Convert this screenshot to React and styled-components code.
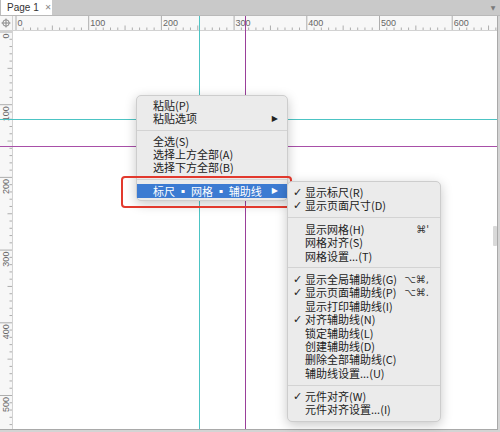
import React from 'react'
import styled, { createGlobalStyle } from 'styled-components'

const GlobalStyle = createGlobalStyle`
  html, body {
    margin: 0;
    padding: 0;
    overflow: hidden;
    background: #d4d4d4;
  }
`;

const SCALE = 0.727;

const Frame = styled.div`
  width: 500px;
  height: 432px;
  position: relative;
  overflow: hidden;
  background: #d4d4d4;
  font-family: "Liberation Sans", "Noto Sans CJK SC", sans-serif;
`;

const TabBar = styled.div`
  height: 16px;
  display: flex;
  align-items: stretch;
  background: #c9c9c9;
  border-bottom: 1px solid #b9b9b9;
  box-sizing: border-box;
`;

const Tab = styled.div`
  width: 52px;
  background: #fff;
  display: flex;
  align-items: center;
  padding-left: 6px;
  box-sizing: border-box;
  font-size: 10px;
  color: #333;
  white-space: nowrap;
  border-left: 1px solid #bbb;
`;

const Close = styled.span`
  margin-left: 6px;
  font-family: "DejaVu Sans", sans-serif;
  font-size: 8px;
  color: #8a8a8a;
`;

const Spacer = styled.div`
  flex: 1;
`;

const DropArrow = styled.div`
  width: 14px;
  display: flex;
  align-items: center;
  justify-content: center;
  font-family: "DejaVu Sans", sans-serif;
  font-size: 6px;
  color: #7a7a7a;
`;

const Workspace = styled.div`
  position: relative;
  width: 498px;
  height: 414px;
  display: flex;
  flex-direction: column;
  background: #fff;
  border-right: 1px solid #a9a9a9;
  border-bottom: 1px solid #a9a9a9;
  box-sizing: border-box;
`;

const TopRow = styled.div`
  height: 14px;
  display: flex;
  background: #f7f7f7;
  border-bottom: 1px solid #d2d2d2;
`;

const Corner = styled.div`
  width: 12px;
  display: flex;
  align-items: center;
  justify-content: center;
  border-right: 1px solid #d2d2d2;
`;

const BodyRow = styled.div`
  flex: 1;
  display: flex;
  min-height: 0;
`;

const SideRuler = styled.div`
  width: 12px;
  background: #f7f7f7;
  border-right: 1px solid #d2d2d2;
`;

const Canvas = styled.div`
  flex: 1;
  position: relative;
  background: #fff;
`;

const ScrollThumb = styled.div`
  position: absolute;
  right: 0;
  top: 195px;
  width: 4px;
  height: 20px;
  background: #d9d9d9;
  border-radius: 1px;
`;

const VGuide = styled.div`
  position: absolute;
  top: 0;
  bottom: 0;
  width: 1px;
  left: ${p => p.$at}px;
  background-color: ${p => p.$color};
  box-shadow: 0 0 0.6px ${p => p.$color};
`;

const HGuide = styled.div`
  position: absolute;
  left: 0;
  right: 0;
  height: 1px;
  top: ${p => p.$at}px;
  background-color: ${p => p.$color};
  box-shadow: 0 0 0.6px ${p => p.$color};
`;

const Menu = styled.div`
  position: absolute;
  left: ${p => p.$left}px;
  top: ${p => p.$top}px;
  width: ${p => p.$width}px;
  padding: ${p => p.$pad};
  background: #ebebeb;
  border: 1px solid #cdcdcd;
  border-radius: 5px;
  box-shadow: 0 3px 12px rgba(0, 0, 0, 0.22);
  box-sizing: border-box;
  font-family: "Noto Sans CJK SC", "DejaVu Sans", sans-serif;
  font-size: 11px;
  color: #222;
`;

const Item = styled.div`
  height: ${p => p.$h}px;
  line-height: ${p => p.$h}px;
  display: flex;
  align-items: center;
  padding: 0 ${p => p.$padRight}px 0 ${p => p.$padLeft}px;
  background: ${p => (p.$active ? '#3c7bd2' : 'transparent')};
  color: ${p => (p.$active ? '#fff' : 'inherit')};
  white-space: nowrap;
`;

const Check = styled.span`
  width: 11px;
  margin-left: -12px;
  margin-right: 1px;
  font-family: "DejaVu Sans", sans-serif;
  font-size: 11px;
  font-weight: bold;
`;

const Label = styled.span`
  flex: 1;
`;

const Arrow = styled.span`
  font-family: "DejaVu Sans", sans-serif;
  font-size: 8px;
`;

const Shortcut = styled.span`
  font-family: "DejaVu Sans", sans-serif;
  font-size: 10px;
  color: #333;
`;

const Separator = styled.div`
  height: 1px;
  margin: ${p => p.$gap}px 0;
  background: #d3d3d3;
`;

const Highlight = styled.div`
  position: absolute;
  left: 121px;
  top: 176px;
  width: 171px;
  height: 32px;
  border: 2px solid #e2392d;
  border-radius: 4px;
  box-sizing: border-box;
`;

function TopRulerSvg() {
  const ticks = [];
  for (let u = 0; u <= 670; u += 10) {
    const x = 3 + u * SCALE;
    const len = u % 100 === 0 ? 14 : u % 50 === 0 ? 4.5 : 2.5;
    ticks.push(<line key={u} x1={x} x2={x} y1={14 - len} y2={14} stroke="#9a9a9a" strokeWidth="0.8" />);
    if (u % 100 === 0) {
      ticks.push(
        <text key={'t' + u} x={x + 1.5} y={9.5} fontSize="9" fill="#666" fontFamily="Liberation Sans, sans-serif">{u}</text>
      );
    }
  }
  return (
    <svg width="485" height="14" style={{ display: 'block' }}>{ticks}</svg>
  );
}

function SideRulerSvg() {
  const ticks = [];
  for (let u = 0; u <= 560; u += 10) {
    const y = 1 + u * SCALE;
    const len = u % 100 === 0 ? 12 : u % 50 === 0 ? 4.5 : 2.5;
    ticks.push(<line key={u} y1={y} y2={y} x1={12 - len} x2={12} stroke="#9a9a9a" strokeWidth="0.8" />);
    if (u % 100 === 0) {
      ticks.push(
        <text key={'t' + u} x={9} y={y + 1.5} fontSize="9" fill="#666" textAnchor="end"
          fontFamily="Liberation Sans, sans-serif" transform={`rotate(-90 9 ${y + 1.5})`}>{u}</text>
      );
    }
  }
  return (
    <svg width="12" height="400" style={{ display: 'block' }}>{ticks}</svg>
  );
}

function CrossHair() {
  return (
    <svg width="10" height="10" viewBox="0 0 10 10">
      <circle cx="5" cy="5" r="3.2" fill="none" stroke="#8a8a8a" strokeWidth="1" />
      <line x1="5" y1="0.5" x2="5" y2="9.5" stroke="#8a8a8a" strokeWidth="1" />
      <line x1="0.5" y1="5" x2="9.5" y2="5" stroke="#8a8a8a" strokeWidth="1" />
    </svg>
  );
}

const mainMenu = [
  { label: '粘贴(P)' },
  { label: '粘贴选项', sub: true },
  'sep',
  { label: '全选(S)' },
  { label: '选择上方全部(A)' },
  { label: '选择下方全部(B)' },
  'sep',
  { label: '标尺 ▪ 网格 ▪ 辅助线', sub: true, active: true },
];

const subMenu = [
  { label: '显示标尺(R)', check: true },
  { label: '显示页面尺寸(D)', check: true },
  'sep',
  { label: '显示网格(H)', key: "⌘'" },
  { label: '网格对齐(S)' },
  { label: '网格设置...(T)' },
  'sep',
  { label: '显示全局辅助线(G)', check: true, key: '⌥⌘,' },
  { label: '显示页面辅助线(P)', check: true, key: '⌥⌘.' },
  { label: '显示打印辅助线(I)' },
  { label: '对齐辅助线(N)', check: true },
  { label: '锁定辅助线(L)' },
  { label: '创建辅助线(D)' },
  { label: '删除全部辅助线(C)' },
  { label: '辅助线设置...(U)' },
  'sep',
  { label: '元件对齐(W)', check: true },
  { label: '元件对齐设置...(I)' },
];

export default function App() {
  return (
    <Frame>
      <GlobalStyle />
      <TabBar>
        <Tab>Page 1<Close>✕</Close></Tab>
        <Spacer />
        <DropArrow>▼</DropArrow>
      </TabBar>
      <Workspace>
        <TopRow>
          <Corner><CrossHair /></Corner>
          <TopRulerSvg />
        </TopRow>
        <BodyRow>
          <SideRuler><SideRulerSvg /></SideRuler>
          <Canvas>
            <ScrollThumb />
          </Canvas>
        </BodyRow>
        <VGuide $at={199} $color="#4cc4c4" />
        <VGuide $at={245} $color="#9a3f9a" />
        <HGuide $at={103} $color="#4cc4c4" />
        <HGuide $at={130} $color="#a84fa8" />
      </Workspace>

      <Menu $left={136} $top={95} $width={152} $pad="3px 0 2px">
        {mainMenu.map((it, i) =>
          it === 'sep' ? (
            <Separator key={i} $gap={4.5} />
          ) : (
            <Item key={i} $h={it.active ? 14 : 13} $padLeft={16} $padRight={9} $active={it.active}>
              <Label>{it.label}</Label>
              {it.sub && <Arrow>▶</Arrow>}
            </Item>
          )
        )}
      </Menu>

      <Highlight />

      <Menu $left={287} $top={181} $width={154} $pad="4px 0">
        {subMenu.map((it, i) =>
          it === 'sep' ? (
            <Separator key={i} $gap={4.5} />
          ) : (
            <Item key={i} $h={13.4} $padLeft={17} $padRight={11}>
              {it.check ? <Check>✓</Check> : null}
              <Label>{it.label}</Label>
              {it.key && <Shortcut>{it.key}</Shortcut>}
            </Item>
          )
        )}
      </Menu>
    </Frame>
  );
}
